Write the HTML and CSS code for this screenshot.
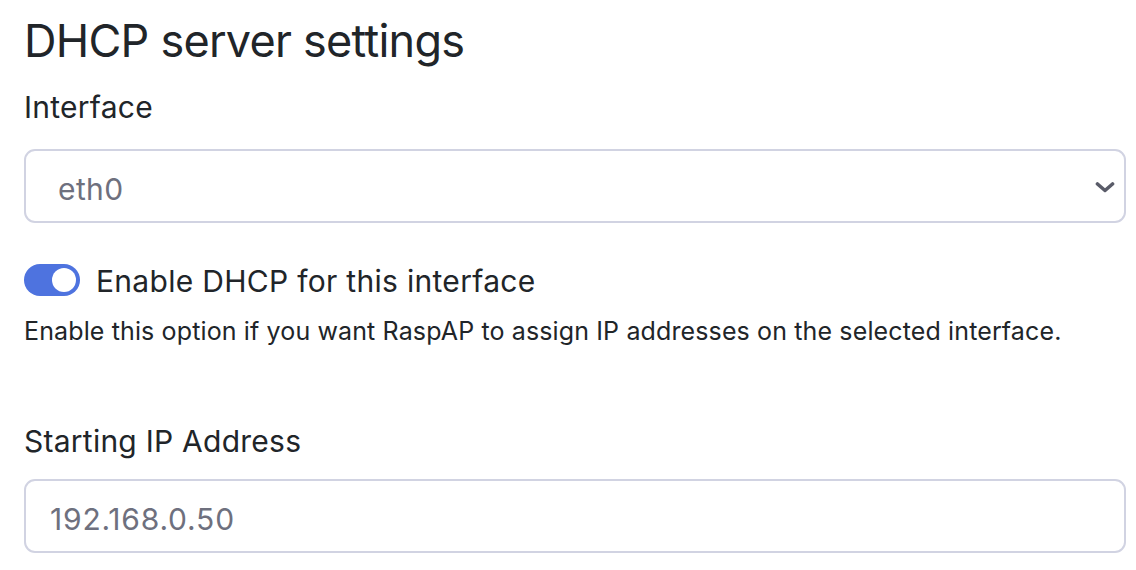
FILE: index.html
```html
<!DOCTYPE html>
<html lang="en">
<head>
<meta charset="utf-8">
<title>DHCP server settings</title>
<link rel="stylesheet" href="styles.css">
</head>
<body>
<main class="page">
  <h4 class="title">DHCP server settings</h4>
  <label class="field-label" for="iface">Interface</label>
  <div class="select" id="iface">
    <span class="select-value">eth0</span>
    <svg class="chevron" width="20" height="11" viewBox="0 0 20 11" aria-hidden="true"><path d="M2.5 2 L10 8.5 L17.5 2" fill="none" stroke="#5a5c69" stroke-width="3.6" stroke-linecap="round" stroke-linejoin="round"/></svg>
  </div>
  <div class="switch-row">
    <span class="switch"><span class="knob"></span></span>
    <span class="switch-label">Enable DHCP for this interface</span>
  </div>
  <p class="help">Enable this option if you want RaspAP to assign IP addresses on the selected interface.</p>
  <label class="field-label field-label-2" for="startip">Starting IP Address</label>
  <div class="input" id="startip">192.168.0.50</div>
</main>
</body>
</html>
```
FILE: styles.css
```css
html, body {
  margin: 0;
  padding: 0;
  background: #ffffff;
}
body {
  font-family: Inter, "Noto Sans", "Liberation Sans", sans-serif;
  color: #212529;
}
.page {
  display: flex;
  flex-direction: column;
  align-items: stretch;
  padding: 0 10px 0 24px;
}
.title {
  margin: 13px 0 0 0;
  font-size: 45px;
  line-height: 56px;
  font-weight: 400;
  letter-spacing: -0.75px;
}
.field-label {
  margin-top: 18px;
  font-size: 30px;
  line-height: 40px;
  letter-spacing: 0.25px;
}
.field-label-2 {
  margin-top: 74px;
}
.select, .input {
  box-sizing: border-box;
  height: 74px;
  border: 2px solid #d1d3e2;
  border-radius: 11px;
  font-size: 30px;
  color: #6e707e;
  display: flex;
  align-items: flex-start;
}
.select {
  margin-top: 22px;
  padding: 7px 9px 0 32px;
  line-height: 63px;
  letter-spacing: 0.4px;
}
.select-value {
  flex: 1;
}
.chevron {
  margin-top: 24px;
}
.input {
  margin-top: 18px;
  padding: 6px 24px 0 24px;
  line-height: 64px;
  letter-spacing: 0.8px;
}
.switch-row {
  margin-top: 41px;
  display: flex;
  align-items: flex-start;
  gap: 16px;
}
.switch {
  box-sizing: border-box;
  width: 56px;
  height: 32px;
  border-radius: 16px;
  background: #4e73df;
  display: flex;
  align-items: center;
  justify-content: flex-end;
  padding-right: 4px;
}
.knob {
  width: 24px;
  height: 24px;
  border-radius: 50%;
  background: #ffffff;
}
.switch-label {
  font-size: 30px;
  line-height: 34px;
  letter-spacing: 0.3px;
}
.help {
  margin: 17px 0 0 0;
  font-size: 25px;
  line-height: 32px;
  letter-spacing: 0.13px;
}
```
